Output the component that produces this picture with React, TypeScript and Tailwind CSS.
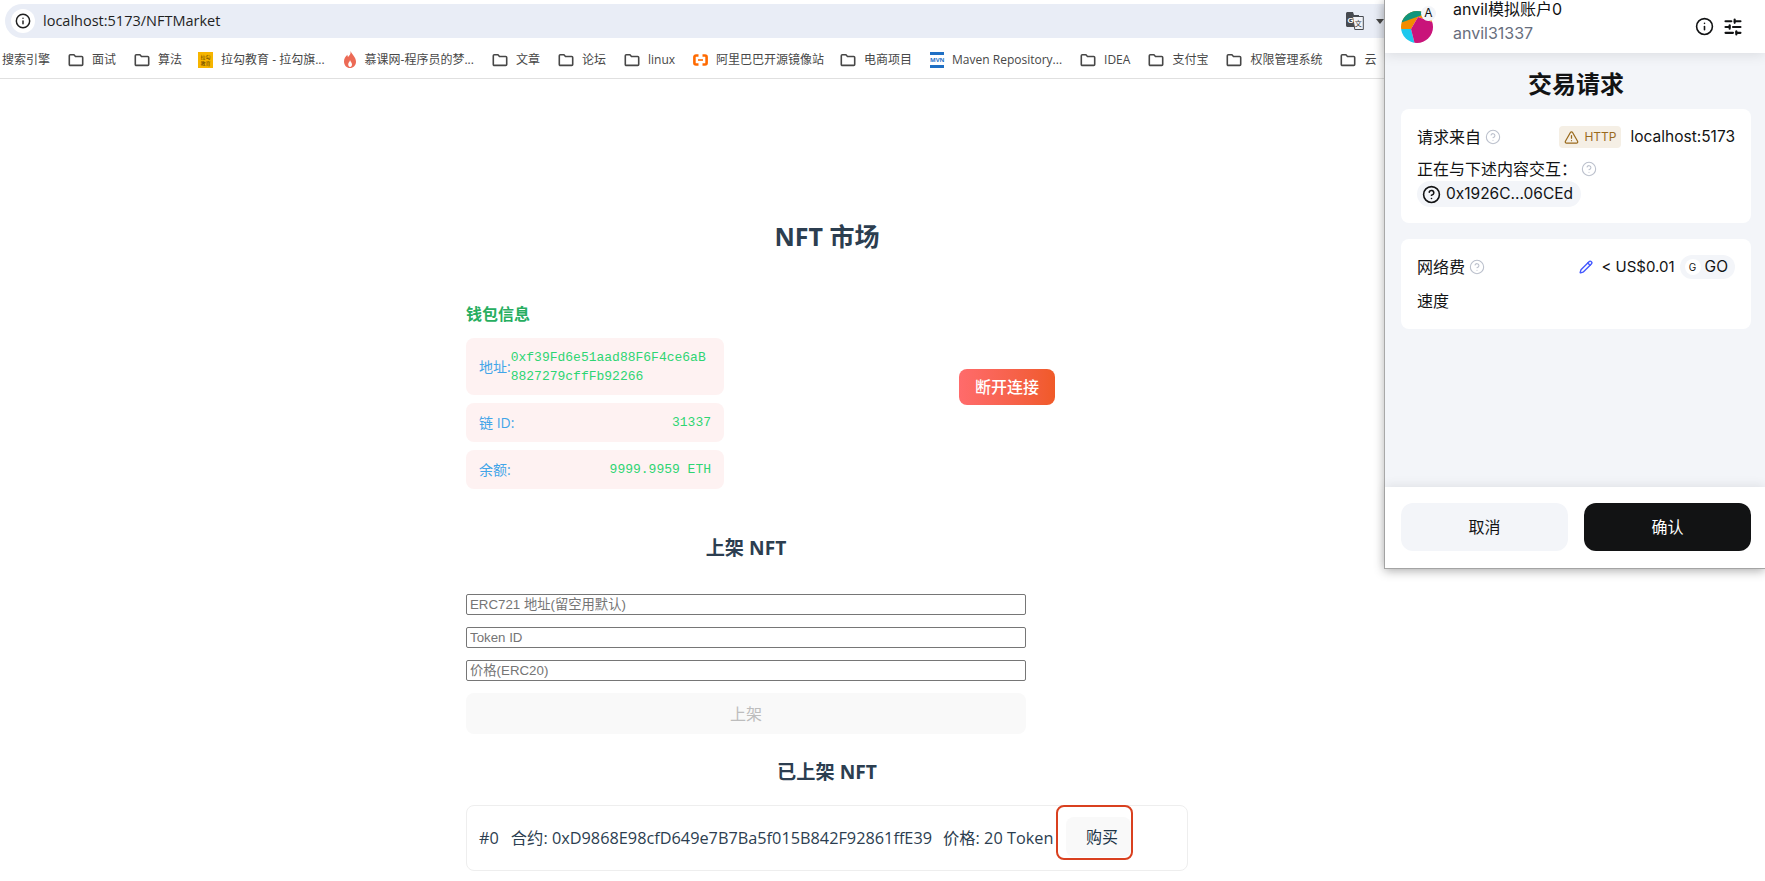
import React from "react";
import { Info, SlidersHorizontal, CircleHelp, TriangleAlert, Pencil } from "lucide-react";

const cjk = "font-['Inter','Noto_Sans_CJK_SC',sans-serif]";

function Folder() {
  return (
    <svg width="16" height="16" viewBox="0 0 16 16" fill="none" stroke="#474747" strokeWidth="1.6" className="shrink-0">
      <path d="M1.3 3.8c0-.6.4-1 1-1h3.6l1.6 1.7h6.2c.6 0 1 .4 1 1v6.9c0 .6-.4 1-1 1H2.3c-.6 0-1-.4-1-1z" />
    </svg>
  );
}

function LagouIcon() {
  return (
    <div className="w-[15px] h-4 -ml-[2px] bg-[#f7b500] flex flex-col items-center justify-center text-[5px] leading-[6px] text-[#5a3b00] shrink-0">
      <span>拉勾</span>
      <span>教育</span>
    </div>
  );
}

function FlameIcon() {
  return (
    <svg width="14" height="17" viewBox="0 0 14 17" className="shrink-0">
      <path d="M7.500 0c.6 3-1 4.300-2.500 6-.5-.8-.6-1.400-.6-2.200C2.300 5.600 1 8 1 10.500 1 14.300 3.700 17 7 17s6-2.700 6-6.300c0-4.200-3.600-6.500-5.500-10.700z" fill="#ec6a55" />
      <path d="M7 9c.2 1.500-1.800 2.400-1.800 4.300C5.200 14.800 6 16 7.100 16s1.900-1.100 1.900-2.500C9 11.600 7.500 10.700 7 9z" fill="#fff" />
    </svg>
  );
}

function AliIcon() {
  return (
    <svg width="15" height="12" viewBox="0 0 15 12" fill="none" className="shrink-0">
      <path d="M5.500 1.500H3C2 1.500 1.400 2.100 1.400 3v6c0 .9.600 1.500 1.600 1.500h2.500M9.500 1.500H12c1 0 1.600.6 1.600 1.500v6c0 .9-.6 1.500-1.600 1.500H9.500" stroke="#ff6a00" strokeWidth="2.600" />
      <path d="M5 6h5" stroke="#ff6a00" strokeWidth="1.600" />
    </svg>
  );
}

function MavenIcon() {
  return (
    <div className="w-[14px] h-4 flex flex-col justify-between shrink-0">
      <div className="h-[3px] bg-[#1f6fc4]" />
      <span className="text-[6px] leading-[6px] font-bold text-[#1f6fc4] text-center">MVN</span>
      <div className="h-[3px] bg-[#1f6fc4]" />
    </div>
  );
}

function TranslateIcon() {
  return (
    <svg width="18" height="18" viewBox="0 0 18 18" className="shrink-0">
      <path d="M0 1.500C0 .7.700 0 1.500 0H7l1 3h5v12H1.500C.7 15 0 14.300 0 13.500z" fill="#474a50" />
      <path d="M6.500 4.500h10.800v13H8.800z" fill="#f1f3f8" stroke="#474a50" />
      <text x="1.500" y="10.500" fontSize="8" fontWeight="700" fill="#fff" fontFamily="Liberation Sans">G</text>
      <text x="8.800" y="13.500" fontSize="7" fill="#3c4043" fontFamily="Noto Sans CJK SC">文</text>
    </svg>
  );
}

function Avatar() {
  return (
    <div className="relative w-8 h-8 shrink-0">
      <svg width="32" height="32" viewBox="0 0 32 32">
        <defs>
          <clipPath id="avatarClip">
            <circle cx="16" cy="16" r="16" />
          </clipPath>
        </defs>
        <g clipPath="url(#avatarClip)">
          <path d="M-2 -2H34V12L17 6L10 18H-2Z" fill="#f28c00" />
          <path d="M-2 -2H22L24 3L2 11L-2 12Z" fill="#10957c" />
          <path d="M-2 18H10L14 34H-2Z" fill="#1ec8ee" />
          <path d="M17 6L34 12V34H14L10 18Z" fill="#c9147a" />
        </g>
      </svg>
      <div className="absolute -top-[5px] -right-[3px] w-[15px] h-[15px] rounded-full bg-[#f3f5f9] flex items-center justify-center text-xs leading-none text-[#121314]">
        A
      </div>
    </div>
  );
}

function Bookmark({ icon, label, className }: { icon: React.ReactNode; label: string; className?: string }) {
  return (
    <div className={`flex items-center gap-[8px] shrink-0 ${className ?? ""}`}>
      {icon}
      <span>{label}</span>
    </div>
  );
}

function WalletRow({ label, value }: { label: string; value: string }) {
  return (
    <div className="flex items-center justify-between rounded-lg bg-[#fef2f2] px-[13px] h-[39px]">
      <span className="text-sm text-[#42a5e8]">{label}</span>
      <span className="font-['Liberation_Mono',monospace] text-[13px] text-[#2ed573]">{value}</span>
    </div>
  );
}

function Field({ placeholder }: { placeholder: string }) {
  return (
    <input
      placeholder={placeholder}
      className="block w-full h-[21px] border border-[#767676] rounded-[2px] px-[3px] text-[13.300px] font-['Liberation_Sans','Noto_Sans_CJK_SC',sans-serif] placeholder:text-[#757575]"
    />
  );
}

function Help({ className }: { className: string }) {
  return <CircleHelp size={16} strokeWidth={1.600} color="#bbc0cc" className={className} />;
}

function WalletPopup() {
  return (
    <div className={`absolute top-0 right-0 w-[381px] h-[569px] border-l border-b border-[#a8a8a8] bg-[#f3f5f9] shadow-[0_2px_10px_rgba(0,0,0,0.3)] flex flex-col text-[#121314] ${cjk}`}>
      <div className="h-[53px] bg-white shadow-[0_2px_12px_rgba(0,0,0,0.1)] flex items-center pl-[16px] pr-[22px] shrink-0 z-10">
        <Avatar />
        <div className="ml-[20px] -mt-[12px] flex flex-col">
          <span className="text-base leading-[24px]">anvil模拟账户0</span>
          <span className="text-base leading-[24px] text-[#686e7d]">anvil31337</span>
        </div>
        <div className="ml-auto flex items-center gap-[9px]">
          <Info size={19} strokeWidth={2} />
          <SlidersHorizontal size={20} strokeWidth={2.500} />
        </div>
      </div>

      <div className="flex-1 pl-[16px] pr-[14px] flex flex-col">
        <h2 className="text-2xl font-bold text-center leading-8 mt-[16px] mb-[8px]">交易请求</h2>
        <div className="bg-white rounded-lg h-[114px] px-[16px] pt-[16px] flex flex-col items-start">
          <div className="w-full flex items-center h-[24px]">
            <span className="text-base">请求来自</span>
            <Help className="ml-[4px]" />
            <span className="ml-auto flex items-center gap-[5px] h-[22px] px-[5px] rounded bg-[#f5efe5] text-xs text-[#9a6a1c]">
              <TriangleAlert size={15} strokeWidth={2} />
              HTTP
            </span>
            <span className="ml-[9px] text-[15.500px]">localhost:5173</span>
          </div>
          <div className="flex items-center h-[24px] mt-[8px]">
            <span className="text-base">正在与下述内容交互：</span>
            <Help className="ml-[4px]" />
          </div>
          <div className="flex items-center gap-[5px] h-[26px] pl-[5px] pr-[8px] rounded-full bg-[#f3f5f9]">
            <CircleHelp size={19} strokeWidth={2} />
            <span className="text-[15.500px]">0x1926C...06CEd</span>
          </div>
        </div>

        <div className="bg-white rounded-lg h-[90px] mt-[16px] px-[16px] pt-[16px] flex flex-col items-start">
          <div className="w-full flex items-center h-[24px]">
            <span className="text-base">网络费</span>
            <Help className="ml-[4px]" />
            <Pencil size={14} strokeWidth={2.400} color="#4459ff" className="ml-auto" />
            <span className="ml-[8px] text-[15px]">&lt; US$0.01</span>
            <span className="ml-[5px] flex items-center h-[24px] pl-[5px] pr-[7px] gap-[4px] rounded-full bg-[#f3f5f9] text-[15.500px]">
              <span className="w-[16px] h-[16px] rounded-full bg-white flex items-center justify-center text-[10px]">G</span>
              GO
            </span>
          </div>
          <span className="text-base mt-[10px]">速度</span>
        </div>
      </div>

      <div className="h-[81px] bg-white shrink-0 pl-[16px] pr-[14px] pt-[16px] flex gap-[16px] shadow-[0_-2px_10px_rgba(0,0,0,0.08)]">
        <button className="flex-1 h-[48px] rounded-xl bg-[#f3f5f9] text-base">取消</button>
        <button className="flex-1 h-[48px] rounded-xl bg-[#121314] text-white text-base">确认</button>
      </div>
    </div>
  );
}

export default function App() {
  return (
    <div className="relative h-screen overflow-hidden bg-white">
      {/* Browser chrome */}
      <div className="h-[79px] border-b border-[#e0e0e0] bg-white pt-[4px] overflow-hidden font-['Open_Sans','Noto_Sans_CJK_SC',sans-serif]">
        <div className="h-[34px] ml-[5px] rounded-l-full bg-[#e9edf6] flex items-center pl-[6px] pr-[381px]">
          <div className="w-[24px] h-[24px] rounded-full bg-white flex items-center justify-center">
            <Info size={16} strokeWidth={2.200} color="#1f1f1f" />
          </div>
          <span className="ml-[8px] text-[14.500px] text-[#1f1f1f]">localhost:5173/NFTMarket</span>
          <div className="ml-auto flex items-center gap-[12px]">
            <TranslateIcon />
            <div className="w-0 h-0 border-x-[4px] border-x-transparent border-t-[5px] border-t-[#474747]" />
          </div>
        </div>
        <div className="h-[27px] mt-[8px] pl-[2px] flex items-center gap-[18px] text-xs text-[#474747] whitespace-nowrap">
          <span className="shrink-0">搜索引擎</span>
          <Bookmark icon={<Folder />} label="面试" />
          <Bookmark icon={<Folder />} label="算法" />
          <Bookmark icon={<LagouIcon />} label="拉勾教育 - 拉勾旗..." />
          <Bookmark icon={<FlameIcon />} label="慕课网-程序员的梦..." />
          <Bookmark icon={<Folder />} label="文章" />
          <Bookmark icon={<Folder />} label="论坛" />
          <Bookmark icon={<Folder />} label="linux" />
          <Bookmark icon={<AliIcon />} label="阿里巴巴开源镜像站" />
          <Bookmark icon={<Folder />} label="电商项目" className="-ml-[2px]" />
          <Bookmark icon={<MavenIcon />} label="Maven Repository..." />
          <Bookmark icon={<Folder />} label="IDEA" />
          <Bookmark icon={<Folder />} label="支付宝" />
          <Bookmark icon={<Folder />} label="权限管理系统" />
          <Bookmark icon={<Folder />} label="云" />
        </div>
      </div>

      {/* Page */}
      <div className="ml-[466px] w-[722px] font-['Open_Sans','Noto_Sans_CJK_SC',sans-serif] text-[#2c3e50]">
        <h1 className="text-[25px] font-bold text-center leading-8 mt-[141px]">NFT 市场</h1>

        <div className="w-[589px] flex items-center justify-between mt-[33px]">
          <div className="w-[258px] pt-[17px]">
            <h3 className="text-base font-bold text-[#27ae60] leading-6 mb-[12px]">钱包信息</h3>
            <div className="flex items-center rounded-lg bg-[#fef2f2] px-[13px] h-[57px]">
              <span className="text-sm text-[#42a5e8] shrink-0">地址:</span>
              <span className="font-['Liberation_Mono',monospace] text-[13px] leading-[19px] text-[#2ed573] break-all">
                0xf39Fd6e51aad88F6F4ce6aB8827279cffFb92266
              </span>
            </div>
            <div className="mt-[8px] flex flex-col gap-[8px]">
              <WalletRow label="链 ID:" value="31337" />
              <WalletRow label="余额:" value="9999.9959 ETH" />
            </div>
          </div>
          <button className="w-[96px] h-[36px] rounded-lg bg-gradient-to-r from-[#ff6b6b] to-[#f05a28] text-white text-base font-medium">
            断开连接
          </button>
        </div>

        <div className="w-[560px]">
          <h2 className="text-[19.200px] font-bold text-center leading-7 mt-[45px]">上架 NFT</h2>
          <div className="mt-[32px] flex flex-col gap-[12px]">
            <Field placeholder="ERC721 地址(留空用默认)" />
            <Field placeholder="Token ID" />
            <Field placeholder="价格(ERC20)" />
          </div>
          <button className="w-full h-[41px] mt-[12px] rounded-lg bg-[#f9f9f9] text-base text-[#bdbdbd]">上架</button>
        </div>

        <h2 className="text-[19.200px] font-bold text-center leading-7 mt-[24px]">已上架 NFT</h2>
        <div className="mt-[19px] h-[66px] rounded-lg border border-[#eeeeee] flex items-center pl-[12px] text-[16.300px]">
          <span>#0</span>
          <span className="ml-[12px]">合约: 0xD9868E98cfD649e7B7Ba5f015B842F92861ffE39</span>
          <span className="ml-[11px]">价格: 20 Token</span>
          <button className="ml-[3px] -mt-[11px] w-[77px] h-[55px] rounded-lg border-2 border-[#d9401f] pl-[8px] pt-[10px] pb-[1px] flex items-stretch text-base text-[#213547]">
            <span className="w-full rounded-lg bg-[#f9f9f9] pl-[6px] flex items-center justify-center">购买</span>
          </button>
        </div>
      </div>

      <WalletPopup />
    </div>
  );
}
